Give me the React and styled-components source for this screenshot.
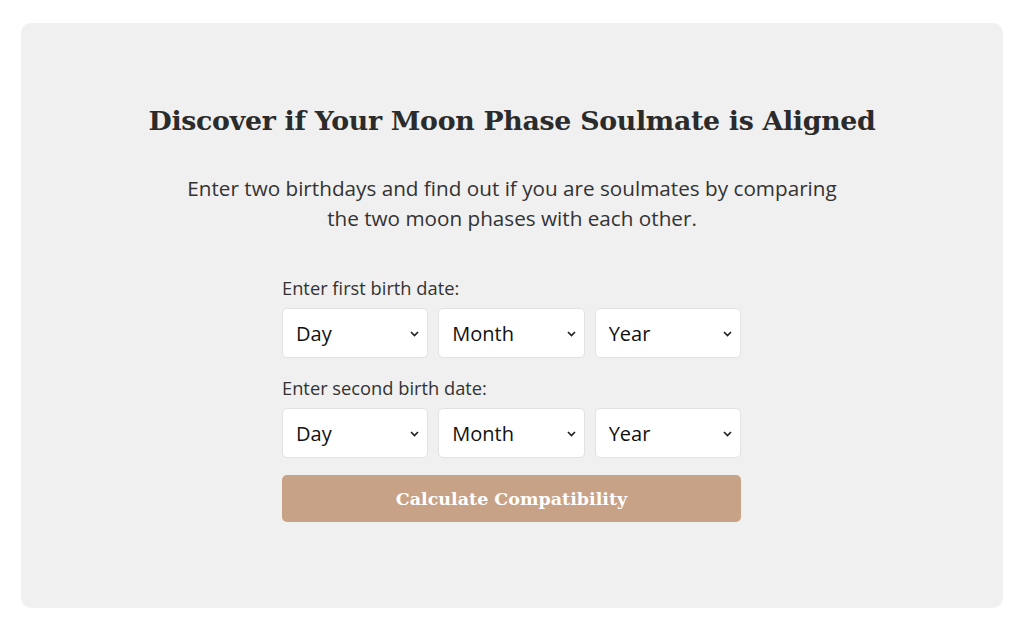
import React from "react";
import styled, { createGlobalStyle } from "styled-components";

const Global = createGlobalStyle`
  html, body { margin: 0; padding: 0; background: #ffffff; }
  body { font-family: "Open Sans", "Liberation Sans", sans-serif; }
`;

const Page = styled.div`
  padding: 23px 21px 22px 21px;
`;

const Card = styled.section`
  background: #f0f0f0;
  border-radius: 10px;
  height: 585px;
  box-sizing: border-box;
  padding: 79px 40px 0;
  display: flex;
  flex-direction: column;
  align-items: center;
`;

const Title = styled.h2`
  margin: 0;
  font-family: "DejaVu Serif", "Liberation Serif", serif;
  font-weight: 700;
  font-size: 26.8px;
  line-height: 38px;
  color: #2b2b2b;
  letter-spacing: -0.3px;
`;

const Lead = styled.p`
  margin: 33px 0 0;
  max-width: 680px;
  text-align: center;
  font-size: 20.7px;
  line-height: 30px;
  color: #333333;
`;

const Form = styled.form`
  width: 459px;
  margin: 43px 0 0 -1px;
  display: flex;
  flex-direction: column;
`;

const Label = styled.label`
  font-size: 18.3px;
  line-height: 24px;
  color: #333333;
  margin-top: ${(p) => (p.$first ? "0" : "18px")};
  margin-bottom: 8px;
`;

const Row = styled.div`
  display: grid;
  grid-template-columns: repeat(3, 1fr);
  gap: 10px;
`;

const SelectWrap = styled.div`
  position: relative;
`;

const Select = styled.select`
  appearance: none;
  -webkit-appearance: none;
  width: 100%;
  height: 50px;
  box-sizing: border-box;
  background: #ffffff;
  border: 1px solid #e2e2e2;
  border-radius: 5px;
  padding: 0 24px 0 13px;
  font-family: "Open Sans", "Liberation Sans", sans-serif;
  font-size: 20px;
  color: #111111;
  outline: none;
`;

const Chevron = styled.svg`
  position: absolute;
  right: 9px;
  top: 50%;
  margin-top: -2px;
  width: 9px;
  height: 6px;
  pointer-events: none;
`;

const Button = styled.button`
  margin-top: 17px;
  height: 47px;
  border: none;
  border-radius: 5px;
  background: #c8a286;
  color: #ffffff;
  font-family: "DejaVu Serif", "Liberation Serif", serif;
  font-weight: 700;
  font-size: 17.5px;
  cursor: pointer;
`;

const DropDown = ({ label }) => (
  <SelectWrap>
    <Select defaultValue="">
      <option value="">{label}</option>
    </Select>
    <Chevron viewBox="0 0 9 6" aria-hidden="true">
      <path d="M1 1l3.5 3.5L8 1" fill="none" stroke="#222" strokeWidth="1.7" />
    </Chevron>
  </SelectWrap>
);

const DateRow = () => (
  <Row>
    <DropDown label="Day" />
    <DropDown label="Month" />
    <DropDown label="Year" />
  </Row>
);

export default function App() {
  return (
    <>
      <Global />
      <Page>
        <Card>
          <Title>Discover if Your Moon Phase Soulmate is Aligned</Title>
          <Lead>
            Enter two birthdays and find out if you are soulmates by comparing the two moon phases
            with each other.
          </Lead>
          <Form onSubmit={(e) => e.preventDefault()}>
            <Label $first>Enter first birth date:</Label>
            <DateRow />
            <Label>Enter second birth date:</Label>
            <DateRow />
            <Button type="submit">Calculate Compatibility</Button>
          </Form>
        </Card>
      </Page>
    </>
  );
}
